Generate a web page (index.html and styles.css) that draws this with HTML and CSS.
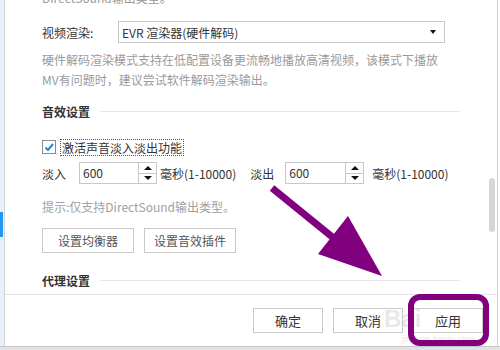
FILE: index.html
```html
<!DOCTYPE html>
<html lang="zh-CN">
<head>
    <meta charset="UTF-8">
    <title>设置</title>
    <link rel="stylesheet" href="styles.css">
</head>
<body>
    <div class="window">
        <div class="side-nav"><span class="nav-active"></span></div>

        <div class="main">
            <div class="scroll-area">
                <div class="content">
                    <p class="top-note">DirectSound输出类型。</p>

                    <div class="form-row">
                        <label class="field-label">视频渲染:</label>
                        <div class="select-box">
                            <span>EVR 渲染器(硬件解码)</span>
                            <i class="caret"></i>
                        </div>
                    </div>
                    <p class="desc">硬件解码渲染模式支持在低配置设备更流畅地播放高清视频，该模式下播放<br>MV有问题时，建议尝试软件解码渲染输出。</p>

                    <!-- 音效设置 -->
                    <div class="section-title"><span>音效设置</span></div>

                    <div class="check-row">
                        <span class="checkbox">
                            <svg width="12" height="12" viewBox="0 0 12 12"><polyline points="2.5,6.5 5,9 10,3" fill="none" stroke="#1e88e5" stroke-width="2"/></svg>
                        </span>
                        <span class="check-label">激活声音淡入淡出功能</span>
                    </div>

                    <div class="fade-row">
                        <span class="fade-label">淡入</span>
                        <div class="spin">
                            <span class="spin-value">600</span>
                            <div class="spin-btns"><span class="spin-up"><i></i></span><span class="spin-down"><i></i></span></div>
                        </div>
                        <span class="unit">毫秒(1-10000)</span>

                        <span class="fade-label fade-label-out">淡出</span>
                        <div class="spin spin-out">
                            <span class="spin-value">600</span>
                            <div class="spin-btns"><span class="spin-up"><i></i></span><span class="spin-down"><i></i></span></div>
                        </div>
                        <span class="unit unit-out">毫秒(1-10000)</span>
                    </div>

                    <p class="hint">提示:仅支持DirectSound输出类型。</p>

                    <div class="btn-row">
                        <button class="btn btn-setting">设置均衡器</button>
                        <button class="btn btn-setting">设置音效插件</button>
                    </div>

                    <!-- 代理设置 -->
                    <div class="section-title section-proxy"><span>代理设置</span></div>
                </div>
                <div class="scrollbar"><span class="thumb"></span></div>
            </div>

            <div class="footer">
                <button class="btn btn-footer">确定</button>
                <button class="btn btn-footer">取消</button>
                <button class="btn btn-footer">应用</button>
            </div>
        </div>
    </div>
    <div class="status-bar"></div>

    <!-- 标注 -->
    <svg class="annotation" width="500" height="350" viewBox="0 0 500 350">
        <text x="384" y="327" class="wm-big">Bai</text>
        <text x="402" y="342" class="wm-url">jingyan.baidu.com</text>
        <line x1="272" y1="188" x2="336" y2="240" stroke="#800080" stroke-width="7"/>
        <polygon points="348,216 318,254 382,276" fill="#800080"/>
        <rect x="411" y="297" width="75" height="46" rx="9" fill="none" stroke="#800080" stroke-width="6"/>
    </svg>
</body>
</html>
```

FILE: styles.css
```css
* {
    margin: 0;
    padding: 0;
    box-sizing: border-box;
}

body {
    width: 500px;
    height: 350px;
    overflow: hidden;
    position: relative;
    background: #fff;
    color: #333;
    font-family: "Noto Sans CJK SC", sans-serif;
    font-size: 12px;
}

.window {
    display: flex;
    height: 346px;
}

/* 左侧导航 */
.side-nav {
    width: 5px;
    background: #e8f1fb;
    border-right: 1px solid #d4d4d4;
    padding-top: 212px;
}

.nav-active {
    display: block;
    width: 3px;
    height: 25px;
    background: #2196f3;
}

.main {
    flex: 1;
    display: flex;
    flex-direction: column;
    border-right: 1px solid #cfcfcf;
    margin-right: 2px;
}

.scroll-area {
    height: 294px;
    display: flex;
    overflow: hidden;
}

.content {
    flex: 1;
    padding: 0 27px 0 37px;
}

.scrollbar {
    width: 10px;
    padding-top: 178px;
}

.thumb {
    display: block;
    width: 6px;
    height: 54px;
    margin-left: 2px;
    border-radius: 3px;
    background: #d6d6d6;
}

.top-note {
    margin-top: -12px;
    line-height: 20px;
    color: #999;
}

.form-row {
    margin-top: 13px;
    height: 22px;
    display: flex;
    align-items: center;
}

.field-label {
    width: 76px;
}

.select-box {
    width: 327px;
    height: 22px;
    border: 1px solid #c8c8c8;
    display: flex;
    align-items: center;
    justify-content: space-between;
    padding: 0 8px 0 3px;
}

.caret {
    width: 0;
    height: 0;
    border-left: 3.5px solid transparent;
    border-right: 3.5px solid transparent;
    border-top: 4px solid #111;
}

.desc {
    margin-top: 7px;
    line-height: 20px;
    color: #9a9a9a;
}

.section-title {
    margin-top: 11px;
    height: 20px;
    display: flex;
    align-items: center;
    font-weight: bold;
    color: #333;
}

.section-title::after {
    content: '';
    flex: 1;
    height: 1px;
    margin-left: 10px;
    background: #e6e6e6;
}

.section-proxy {
    margin-top: 17px;
}

.check-row {
    margin-top: 16px;
    height: 20px;
    display: flex;
    align-items: center;
}

.checkbox {
    width: 14px;
    height: 14px;
    border: 1px solid #8a8a8a;
    display: flex;
    align-items: center;
    justify-content: center;
}

.check-label {
    margin-left: 5px;
    padding: 0 1px;
    line-height: 15px;
    outline: 1px dotted #555;
}

.fade-row {
    margin-top: 5px;
    height: 22px;
    display: flex;
    align-items: center;
}

.fade-label {
    width: 37px;
}

.fade-label-out {
    width: 35px;
    margin-left: 14px;
}

.spin {
    width: 78px;
    height: 22px;
    border: 1px solid #c8c8c8;
    display: flex;
}

.spin-out {
    width: 79px;
}

.spin-value {
    flex: 1;
    padding-left: 3px;
    line-height: 19px;
    color: #333;
}

.spin-btns {
    width: 18px;
    border-left: 1px solid #c8c8c8;
    display: flex;
    flex-direction: column;
}

.spin-btns span {
    flex: 1;
    display: flex;
    align-items: center;
    justify-content: center;
}

.spin-down {
    border-top: 1px solid #c8c8c8;
}

.spin-up i {
    border-left: 4px solid transparent;
    border-right: 4px solid transparent;
    border-bottom: 4px solid #111;
}

.spin-down i {
    border-left: 4px solid transparent;
    border-right: 4px solid transparent;
    border-top: 4px solid #111;
}

.unit {
    margin-left: 3px;
}

.unit-out {
    margin-left: 8px;
}

.hint {
    margin-top: 13px;
    line-height: 20px;
    color: #a0a0a0;
}

.btn-row {
    margin-top: 11px;
    display: flex;
    gap: 10px;
}

.btn {
    background: #fff;
    border: 1px solid #c9c9c9;
    font-family: inherit;
    cursor: pointer;
}

.btn-setting {
    width: 92px;
    height: 25px;
    font-size: 12px;
    color: #555;
}

.footer {
    flex: 1;
    border-top: 1px solid #e1e1e1;
    display: flex;
    justify-content: flex-end;
    gap: 10px;
    padding: 13px 14px 0 0;
}

.btn-footer {
    width: 70px;
    height: 25px;
    font-size: 13px;
    color: #333;
}

.status-bar {
    height: 4px;
    background: #e2e2e2;
    border-top: 1px solid #c8c8c8;
}

.annotation {
    position: absolute;
    top: 0;
    left: 0;
    pointer-events: none;
}

.wm-big {
    font-family: "Liberation Sans", sans-serif;
    font-size: 24px;
    font-weight: bold;
    fill: rgba(190, 190, 190, 0.35);
}

.wm-url {
    font-family: "Liberation Sans", sans-serif;
    font-size: 9px;
    fill: rgba(190, 190, 190, 0.4);
}
```
